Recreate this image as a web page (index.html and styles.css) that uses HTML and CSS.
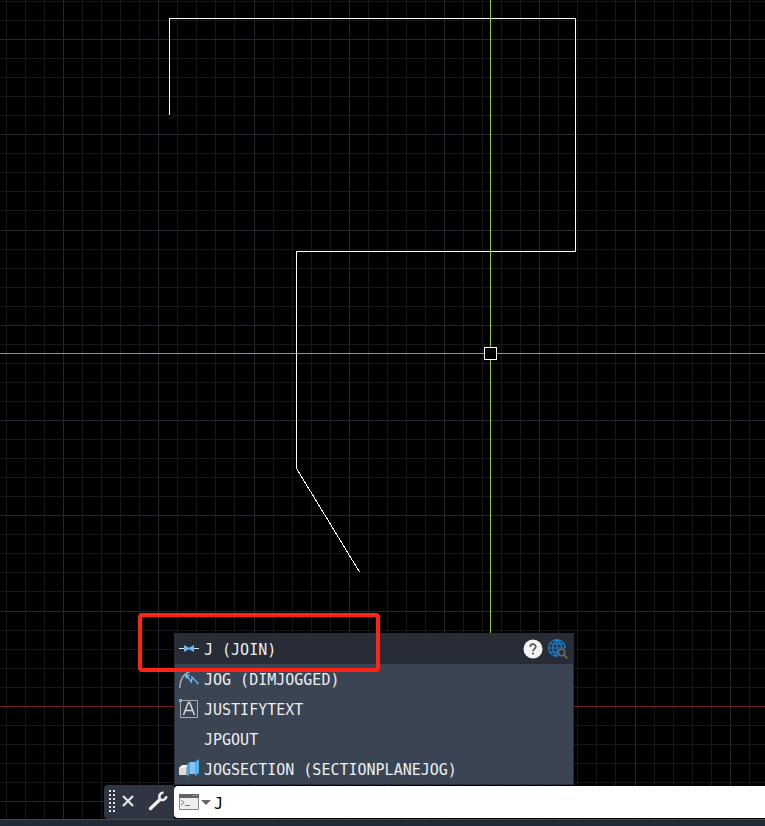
FILE: index.html
```html
<!DOCTYPE html>
<html lang="en">
<head>
<meta charset="utf-8">
<title>Drawing</title>
<link rel="stylesheet" href="styles.css">
</head>
<body>
<main class="workspace">
  <svg class="canvas" role="img" aria-label="Drawing area">
    <path id="minor" class="minor"/>
    <path id="major" class="major"/>
    <path class="axis" d="M0 706.5H4000"/>
    <path class="cross-x" d="M0 353.5H4000"/>
    <path class="shape" d="M169.5 115V18.5H575.5V251.5H296.5V468.5L359.500 572"/>
    <path class="cross-y" d="M490.500 0V706"/>
    <rect class="pickbox" x="484.500" y="347.500" width="12" height="12"/>
  </svg>

  <section class="console">
    <ul class="suggestions">
      <li class="row active">
        <button class="pick" type="button">
          <svg class="icon" viewBox="0 0 20 20"><path d="M0 9.500h5M15 9.500h5" stroke="#e4e6e8"/><path d="M5 6L10 8.800 15 6V13L10 10.200 5 13z" fill="#69b9f5"/></svg>
          <span>J (JOIN)</span>
        </button>
        <button class="tool" type="button" aria-label="Help">
          <svg class="icon" viewBox="0 0 20 20"><circle cx="10" cy="10" r="9.500" fill="#f4f4f4"/><path d="M7.200 8C7.200 4.200 12.800 4.200 12.800 7.800 12.800 9.800 10 9.800 10 12.200" fill="none" stroke="#555" stroke-width="1.600"/><circle cx="10" cy="14.500" r="1.100" fill="#555"/></svg>
        </button>
        <button class="tool" type="button" aria-label="Search the web">
          <svg class="icon" viewBox="0 0 20 20"><g fill="none" stroke="#1683d8" stroke-width="1.200"><path d="M9.500 17.300A8.300 8.300 0 1 1 17.200 9.500M9 1V17.500M1 9H17M2.500 5H15.500M2.500 13H10M9 1C3.500 5 3.500 13 9 17.500M9 1C12.500 3.500 13.500 6.500 13.300 9"/></g><circle cx="13.500" cy="13.500" r="3.200" fill="#282d37" stroke="#6c6c6c" stroke-width="1.500"/><path d="M16 16L19.500 19.500" stroke="#7c6247" stroke-width="1.600"/></svg>
        </button>
      </li>
      <li class="row">
        <button class="pick" type="button">
          <svg class="icon" viewBox="0 0 20 20"><path d="M.7 19C1 10 5 4 12 2" fill="none" stroke="#a6abb2" stroke-width="1.500"/><path d="M7 6L12.500 13 13 8 19.500 15" fill="none" stroke="#69b9f5" stroke-width="1.300"/><path d="M5.500 4.500L11 6 7 10z" fill="#69b9f5"/></svg>
          <span>JOG (DIMJOGGED)</span>
        </button>
      </li>
      <li class="row">
        <button class="pick" type="button">
          <svg class="icon" viewBox="0 0 20 20"><path d="M1.500 1.500H18.500V18.500H1.500z" fill="none" stroke="#a6abb2"/><path d="M4.500 16L9.300 3.500H10.700L15.500 16M6.300 11.500H13.700" fill="none" stroke="#d5d7da" stroke-width="1.500"/><path d="M0 0H3V3H0z" fill="#69b9f5"/></svg>
          <span>JUSTIFYTEXT</span>
        </button>
      </li>
      <li class="row">
        <button class="pick" type="button">
          <span class="icon"></span>
          <span>JPGOUT</span>
        </button>
      </li>
      <li class="row">
        <button class="pick" type="button">
          <svg class="icon" viewBox="0 0 20 20"><path d="M0 9L3 6H10L7 9z" fill="#f6f6f6"/><path d="M0 9H7V16H0z" fill="#ddd"/><path d="M7 9L9 7V15L7 16z" fill="#aaa"/><path d="M8 5L11 3V15L8 18z" fill="#4aa3e4"/><path d="M11 3H16V15H11z" fill="#7fc4fa"/><path d="M16 3L20 0V14L16 17z" fill="#55ace9"/></svg>
          <span>JOGSECTION (SECTIONPLANEJOG)</span>
        </button>
      </li>
    </ul>

    <div class="bar">
      <div class="handle">
        <svg class="grip" viewBox="0 0 6 22" aria-hidden="true"><path d="M1 0V22M5 0V22" stroke="#e2e2e2" stroke-width="2" stroke-dasharray="2 2"/></svg>
        <button class="tool close" type="button" aria-label="Close">
          <svg viewBox="0 0 12 12"><path d="M1 1L11 11M11 1L1 11" stroke="#dedede" stroke-width="2.400"/></svg>
        </button>
        <button class="tool wrench" type="button" aria-label="Customize">
          <svg viewBox="0 0 20 20"><path d="M2.500 17.500L12 8.500" stroke="#ededeb" stroke-width="3.400" stroke-linecap="round"/><path d="M15.500 1.500C11.500 2 10.500 5 12 8.200 14.500 10 18 8.500 18.500 5.200" fill="none" stroke="#ededeb" stroke-width="2.600"/></svg>
        </button>
      </div>
      <div class="prompt">
        <button class="tool recent" type="button" aria-label="Recent commands">
          <svg viewBox="0 0 32 16"><path d="M.5.500H19.500V15.500H.5z" fill="#eee" stroke="#858585"/><path d="M0 0H20V4H0z" fill="#646464"/><path d="M14 1h1v1h-1zM17 1h1v1h-1z" fill="#ddd"/><path d="M2 6L5 8.500 2 11M6 11.500H11" fill="none" stroke="#777"/><path d="M22 6H32L27 11z" fill="#666"/></svg>
        </button>
        <input class="command" type="text" value="J" aria-label="Command">
      </div>
    </div>
    <div class="highlight"></div>
  </section>
  <footer class="status"></footer>
</main>
<script src="grid.js"></script>
</body>
</html>
```
FILE: styles.css
```css
* { box-sizing: border-box; }

body {
  margin: 0;
  background: #000;
  font: 15px/20px "DejaVu Sans Mono", monospace;
}

button {
  padding: 0;
  border: 0;
  background: none;
  color: inherit;
  font: inherit;
  text-align: left;
}

svg { display: block; }

.workspace {
  position: relative;
  display: flex;
  flex-direction: column;
  justify-content: flex-end;
  min-height: 100vh;
  overflow: hidden;
}

.canvas {
  position: absolute;
  inset: 0;
  width: 100%;
  height: 100%;
  fill: none;
  shape-rendering: crispEdges;
}

.minor { stroke: #17171b; }
.major { stroke: #262633; }
.axis { stroke: #731c20; }
.shape { stroke: #fff; }
.cross-x { stroke: #d67c66; }
.cross-y { stroke: #8fc964; }
.pickbox { fill: #000; stroke: #fff; }

.console {
  position: relative;
  margin-left: 104px;
}

.suggestions {
  width: 400px;
  margin: 0 0 0 70px;
  padding: 0;
  list-style: none;
  color: #eceef0;
  background: #3b4453;
  border: 1px solid #272d38;
  border-top: 0;
}

.row {
  display: flex;
  align-items: center;
  gap: 5px;
  height: 30px;
  padding: 0 5px 0 4px;
}

.row.active {
  height: 31px;
  background: #272c37;
}

.pick {
  display: flex;
  flex: 1;
  align-items: center;
  gap: 5px;
}

.pick span { padding-top: 2px; }

.icon {
  width: 20px;
  height: 20px;
}

.bar {
  display: flex;
  height: 34px;
}

.handle {
  display: flex;
  align-items: center;
  width: 70px;
  padding: 0 6px 2px 5px;
  background: #2f3542;
  border-radius: 4px 0 0 4px;
}

.grip {
  width: 6px;
  height: 22px;
}

.close {
  width: 12px;
  margin: 0 auto 0 7px;
}

.wrench { width: 20px; }

.prompt {
  display: flex;
  flex: 1;
  align-items: center;
  gap: 3px;
  margin: 1px 0;
  padding-left: 5px;
  background: #fff;
  border-radius: 4px 0 0 4px;
}

.recent { width: 32px; }

.command {
  flex: 1;
  min-width: 0;
  padding: 4px 0 0;
  border: 0;
  outline: 0;
  background: none;
  color: #000;
  font: inherit;
}

.highlight {
  position: absolute;
  top: -20px;
  left: 34px;
  width: 242px;
  height: 59px;
  border: 4px solid #ff2414;
  border-radius: 4px;
  pointer-events: none;
}

.status {
  position: relative;
  height: 7px;
  background: #222a35;
  border-top: 1px solid #454a55;
}
```
FILE: grid.js
```js
// Every fifth grid line is a major one.
const STEP = 19.05;
const ORIGIN = { x: 63.5, y: 39.5 };
const paths = { minor: "", major: "" };

for (let i = -4; i < 200; i++) {
  const kind = i % 5 === 0 ? "major" : "minor";
  const x = Math.floor(ORIGIN.x + i * STEP) + 0.5;
  const y = Math.floor(ORIGIN.y + i * STEP) + 0.5;
  paths[kind] += `M${x} 0V4000M0 ${y}H4000`;
}

document.getElementById("minor").setAttribute("d", paths.minor);
document.getElementById("major").setAttribute("d", paths.major);
```
